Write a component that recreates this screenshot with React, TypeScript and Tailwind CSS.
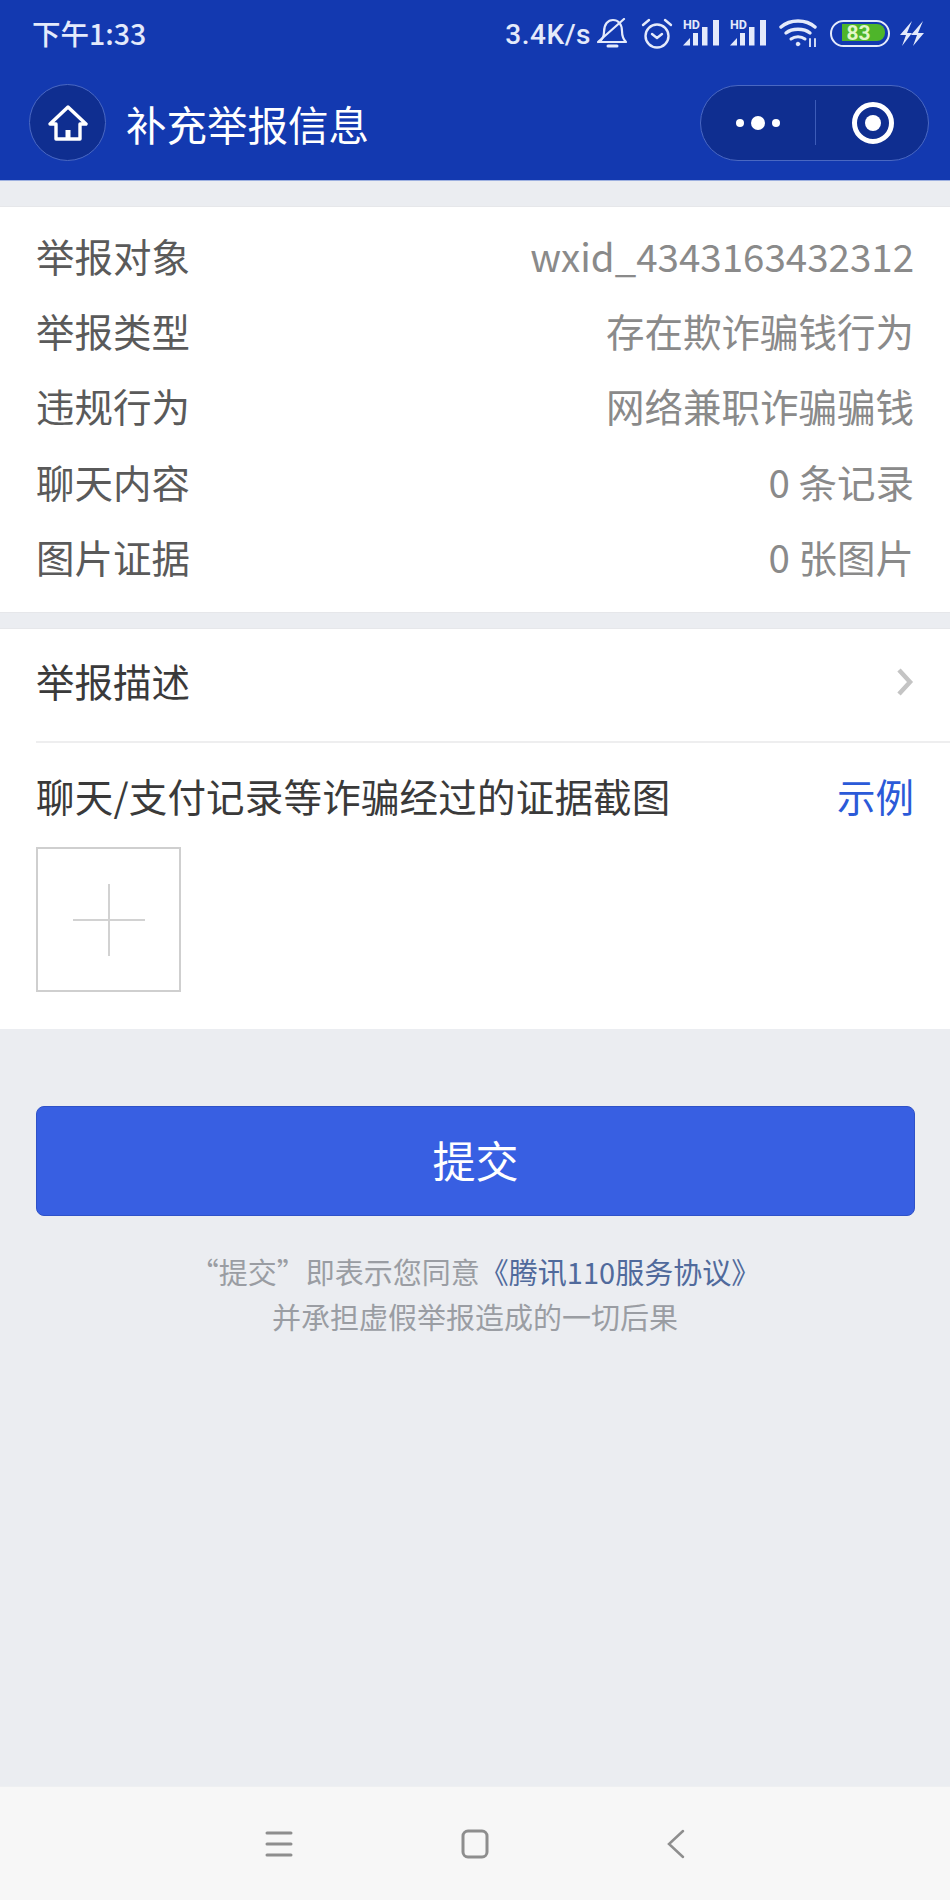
import React from "react";

const cjk = { fontFamily: '"Noto Sans CJK SC", sans-serif' };

function Signal() {
  return (
    <span className="relative block w-[36px] h-[26px]">
      <span className="absolute left-0 top-[-1px] text-[12.5px] leading-[12px] font-bold text-[#e4eafb] font-['Roboto',sans-serif]">HD</span>
      <svg className="absolute left-0 top-0" width="36" height="26" viewBox="0 0 36 26" fill="#e4eafb">
        <path d="M0 25.500 7 18V25.500z" />
        <rect x="10" y="13" width="5" height="12.500" />
        <rect x="19" y="7" width="5.500" height="18.500" />
        <rect x="30" y="0" width="6" height="25.500" />
      </svg>
    </span>
  );
}

function Row({ label, value }: { label: string; value: string }) {
  return (
    <div className="h-[75.1px] flex items-center justify-between">
      <span className="text-[#5a5a5a]">{label}</span>
      <span className="text-[#8a8a8a]">{value}</span>
    </div>
  );
}

export default function App() {
  return (
    <div className="w-[950px] h-[1900px] bg-[#ebedf1] flex flex-col overflow-hidden" style={cjk}>
      <header className="h-[181px] bg-[#1339b0] shrink-0 border-b border-[#9db0e0]">
        <div className="h-[66px] pl-[32px] pr-[25px] flex items-center justify-between text-[#e4eafb] text-[30px]">
          <span className="text-[28.5px] leading-none font-medium">下午1:33</span>
          <div className="flex items-center">
            <span className="text-[28px] leading-none font-medium font-['Roboto',sans-serif] tracking-[0.5px] mr-[6px] mt-[3px]">3.4K/s</span>
            <svg className="mr-[13px]" width="31" height="30" viewBox="0 0 31 30" fill="none" stroke="#e4eafb" strokeWidth="2.2" strokeLinecap="round" strokeLinejoin="round">
              <path d="M2 24c3-2 5-5 5-10C7 6 11 2 16 2s9 4 9 11c0 6 2 9 4 11z" />
              <path d="M1 24 27 1" />
              <path d="M11 28h9" strokeWidth="3" />
            </svg>
            <svg className="mr-[10px]" width="32" height="31" viewBox="0 0 32 31" fill="none" stroke="#e4eafb" strokeWidth="2.4" strokeLinecap="round" strokeLinejoin="round">
              <circle cx="16" cy="18" r="11.500" />
              <path d="M11 16l5 4 5-4" />
              <path d="M2 7l6-5M30 7l-6-5" />
            </svg>
            <span className="mr-[11px]"><Signal /></span>
            <span className="mr-[13px]"><Signal /></span>
            <svg className="mr-[12px]" width="39" height="28" viewBox="0 0 39 28" fill="none" stroke="#e4eafb" strokeWidth="3.4" strokeLinecap="round">
              <path d="M2 8c9-8 25-8 34 0" />
              <path d="M7 14c6-5 18-5 24 0" />
              <path d="M12 20c4-3 10-3 14 0" strokeWidth="3" />
              <circle cx="19" cy="25" r="1.800" fill="#e4eafb" strokeWidth="1" />
              <path d="M31 20v8M36 20v8" strokeWidth="1.800" />
            </svg>
            <span className="relative w-[60px] h-[27px] rounded-full border-[2.5px] border-[#e4eafb] flex items-center mr-[9px]">
              <span className="absolute left-[10px] top-[2.500px] w-[43px] h-[17px] rounded-r-[8px] bg-[#4eb52a]" />
              <span className="absolute left-[-3px] right-0 text-center text-[#e0f7c8] text-[21px] leading-none font-bold font-['Roboto',sans-serif]">83</span>
            </span>
            <svg width="26" height="27" viewBox="0 0 26 27" fill="#e4eafb">
              <path d="M13 1 1 15h6l-4 11 10-13H8z" />
              <path d="M24 1 12 15h6l-4 11 11-13h-6z" />
            </svg>
          </div>
        </div>
        <div className="h-[77px] mt-[18px] pl-[29px] pr-[21px] flex items-center justify-between">
          <div className="flex items-center">
            <div className="w-[77px] h-[77px] rounded-full bg-[#0f2e90] border border-[#4a68c2] flex items-center justify-center">
              <svg width="40" height="36" viewBox="0 0 40 36" fill="none" stroke="#fff" strokeWidth="3.4" strokeLinejoin="round" strokeLinecap="round">
                <path d="M2 19 20 2l18 17h-6v15H8V19z" />
                <path d="M17.500 34v-9h5v9z" fill="#fff" stroke="none" />
              </svg>
            </div>
            <span className="ml-[20px] mt-[4px] text-white text-[40.5px] leading-none">补充举报信息</span>
          </div>
          <div className="w-[229px] h-[76px] rounded-full bg-[#0f2e90] border border-[#4a68c2] flex items-center">
            <div className="w-[114px] flex items-center justify-center gap-[7px]">
              <span className="w-[8px] h-[8px] rounded-full bg-white" />
              <span className="w-[14px] h-[14px] rounded-full bg-white" />
              <span className="w-[8px] h-[8px] rounded-full bg-white" />
            </div>
            <div className="w-px h-[45px] bg-[#3d5cb8]" />
            <div className="flex-1 flex items-center justify-center pl-[2px]">
              <div className="w-[42px] h-[42px] rounded-full border-[5px] border-white flex items-center justify-center">
                <span className="w-[16px] h-[16px] rounded-full bg-white" />
              </div>
            </div>
          </div>
        </div>
      </header>

      <section className="mt-[25px] h-[407px] bg-white px-[36px] pt-[11px] text-[38.5px] leading-none border-y border-[#e6e7ea]">
        <Row label="举报对象" value="wxid_4343163432312" />
        <Row label="举报类型" value="存在欺诈骗钱行为" />
        <Row label="违规行为" value="网络兼职诈骗骗钱" />
        <Row label="聊天内容" value="0 条记录" />
        <Row label="图片证据" value="0 张图片" />
      </section>

      <section className="mt-[15px] h-[401px] bg-white pl-[36px] text-[38.5px] leading-none border-t border-[#e6e7ea]">
        <div className="h-[114px] pb-[10px] flex items-center justify-between border-b-2 border-[#eeeeef] pr-[36px] text-[#3a3a3a]">
          <span>举报描述</span>
          <svg className="mt-[3px]" width="18" height="28" viewBox="0 0 18 28" fill="none" stroke="#c4c4c4" strokeWidth="4.500">
            <path d="M3 2 14 14 3 26" />
          </svg>
        </div>
        <div className="h-[104px] flex items-center justify-between pr-[36px] text-[#3a3a3a]">
          <span className="tracking-[0.2px]">聊天/支付记录等诈骗经过的证据截图</span>
          <span className="text-[#2b5ad8]">示例</span>
        </div>
        <div className="w-[145px] h-[145px] border-2 border-[#cfcfcf] flex items-center justify-center">
          <svg width="72" height="72" viewBox="0 0 72 72" stroke="#d2d2d2" strokeWidth="2">
            <path d="M36 0v72M0 36h72" />
          </svg>
        </div>
      </section>

      <button className="mt-[77px] mx-[36px] h-[110px] w-[879px] shrink-0 rounded-[8px] bg-[#385fe2] border border-[#2f52c8] text-white text-[43px] leading-none pb-[4px]">
        提交
      </button>

      <div className="mt-[33px] text-center text-[29px] leading-[44.5px] text-[#9a9da3]">
        <div>
          <span>“提交”即表示您同意</span>
          <span className="text-[#506a9c]">《腾讯110服务协议》</span>
        </div>
        <div>并承担虚假举报造成的一切后果</div>
      </div>

      <footer className="mt-auto h-[114px] bg-[#f7f7f7] border-t border-[#eeeff1] flex items-start shrink-0">
        <svg className="ml-[265px] mt-[43px]" width="28" height="28" viewBox="0 0 28 28" stroke="#8e8e8e" strokeWidth="3" strokeLinecap="round">
          <path d="M2 3h24M2 14h24M2 25h24" />
        </svg>
        <svg className="ml-[168px] mt-[42px]" width="28" height="30" viewBox="0 0 28 30" fill="none" stroke="#8e8e8e" strokeWidth="3">
          <rect x="2" y="2" width="24" height="26" rx="5" />
        </svg>
        <svg className="ml-[177px] mt-[42px]" width="20" height="30" viewBox="0 0 20 30" fill="none" stroke="#8e8e8e" strokeWidth="2.500" strokeLinecap="round">
          <path d="M17 2 3 15l14 13" />
        </svg>
      </footer>
    </div>
  );
}
